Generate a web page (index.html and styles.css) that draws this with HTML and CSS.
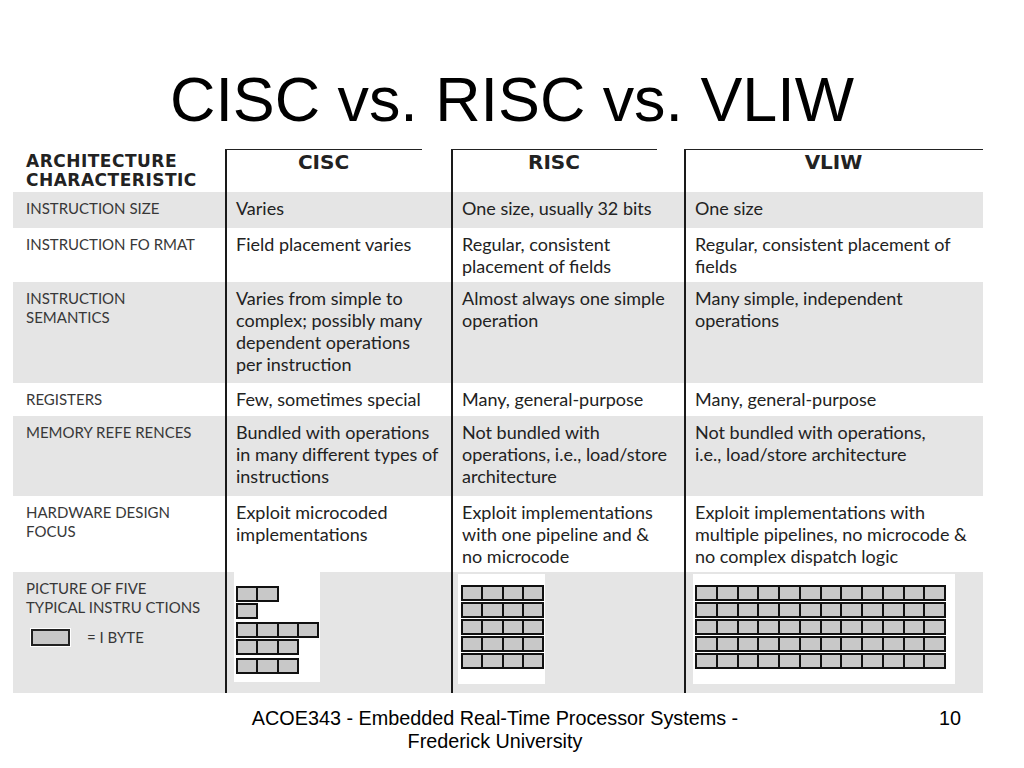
FILE: index.html
```html
<!DOCTYPE html>
<html>
<head>
<meta charset="utf-8">
<link rel="stylesheet" href="styles.css">
</head>
<body>
<h1 class="title">CISC vs. RISC vs. VLIW</h1>
<div class="table">
  <div class="label-head">ARCHITECTURE<br>CHARACTERISTIC</div>
  <div class="col head"><div class="hline hl-cisc">CISC</div></div>
  <div class="col head"><div class="hline hl-risc">RISC</div></div>
  <div class="col head"><div class="hline">VLIW</div></div>

  <div class="label gray">INSTRUCTION SIZE</div>
  <div class="col cell gray">Varies</div>
  <div class="col cell gray">One size, usually 32 bits</div>
  <div class="col cell gray">One size</div>

  <div class="label">INSTRUCTION FO RMAT</div>
  <div class="col cell">Field placement varies</div>
  <div class="col cell">Regular, consistent<br>placement of fields</div>
  <div class="col cell">Regular, consistent placement of<br>fields</div>

  <div class="label gray">INSTRUCTION<br>SEMANTICS</div>
  <div class="col cell gray">Varies from simple to<br>complex; possibly many<br>dependent operations<br>per instruction</div>
  <div class="col cell gray">Almost always one simple<br>operation</div>
  <div class="col cell gray">Many simple, independent<br>operations</div>

  <div class="label">REGISTERS</div>
  <div class="col cell">Few, sometimes special</div>
  <div class="col cell">Many, general-purpose</div>
  <div class="col cell">Many, general-purpose</div>

  <div class="label gray">MEMORY REFE RENCES</div>
  <div class="col cell gray">Bundled with operations<br>in many different types of<br>instructions</div>
  <div class="col cell gray">Not bundled with<br>operations, i.e., load/store<br>architecture</div>
  <div class="col cell gray">Not bundled with operations,<br>i.e., load/store architecture</div>

  <div class="label">HARDWARE DESIGN<br>FOCUS</div>
  <div class="col cell">Exploit microcoded<br>implementations</div>
  <div class="col cell">Exploit implementations<br>with one pipeline and &amp;<br>no microcode</div>
  <div class="col cell">Exploit implementations with<br>multiple pipelines, no microcode &amp;<br>no complex dispatch logic</div>

  <div class="label gray pic-label">
    <div>PICTURE OF FIVE<br>TYPICAL INSTRU CTIONS</div>
    <div class="legend"><span class="legend-box"></span><span>= I BYTE</span></div>
  </div>
  <div class="col pic gray">
    <div class="wbox wb-cisc">
      <div class="brow"><i></i><i></i></div>
      <div class="brow"><i></i></div>
      <div class="brow gap"><i></i><i></i><i></i><i></i></div>
      <div class="brow"><i></i><i></i><i></i></div>
      <div class="brow gap"><i></i><i></i><i></i></div>
    </div>
  </div>
  <div class="col pic gray">
    <div class="wbox wb-risc">
      <div class="brow"><i></i><i></i><i></i><i></i></div>
      <div class="brow"><i></i><i></i><i></i><i></i></div>
      <div class="brow"><i></i><i></i><i></i><i></i></div>
      <div class="brow"><i></i><i></i><i></i><i></i></div>
      <div class="brow"><i></i><i></i><i></i><i></i></div>
    </div>
  </div>
  <div class="col pic gray">
    <div class="wbox wb-vliw">
      <div class="brow"><i></i><i></i><i></i><i></i><i></i><i></i><i></i><i></i><i></i><i></i><i></i><i></i></div>
      <div class="brow"><i></i><i></i><i></i><i></i><i></i><i></i><i></i><i></i><i></i><i></i><i></i><i></i></div>
      <div class="brow"><i></i><i></i><i></i><i></i><i></i><i></i><i></i><i></i><i></i><i></i><i></i><i></i></div>
      <div class="brow"><i></i><i></i><i></i><i></i><i></i><i></i><i></i><i></i><i></i><i></i><i></i><i></i></div>
      <div class="brow"><i></i><i></i><i></i><i></i><i></i><i></i><i></i><i></i><i></i><i></i><i></i><i></i></div>
    </div>
  </div>
</div>
<footer class="footer">
  <div class="foot-text">ACOE343 - Embedded Real-Time Processor Systems -<br>Frederick University</div>
  <div class="page">10</div>
</footer>
</body>
</html>
```
FILE: styles.css
```css
html, body {
  margin: 0;
  padding: 0;
  background: #ffffff;
}
body {
  width: 1024px;
  height: 768px;
  overflow: hidden;
  font-family: "Liberation Sans", Arial, sans-serif;
  color: #000;
}
.title {
  margin: 68px 0 0 0;
  height: 62px;
  font-family: "Liberation Sans", Arial, sans-serif;
  font-weight: normal;
  font-size: 62.8px;
  line-height: 62px;
  text-align: center;
  color: #000;
}
.table {
  margin: 20px 0 0 13px;
  width: 970px;
  display: grid;
  grid-template-columns: 212px 226px 233px 299px;
  grid-template-rows: 42px 36px 54px 101px 33px 80px 76px 121px;
  font-family: Lato, "Open Sans", sans-serif;
}
.gray {
  background: #e5e5e5;
}
.col {
  box-sizing: border-box;
  border-left: 2px solid #1a1a1a;
}
.label-head {
  padding: 2px 0 0 13px;
  font-family: "DejaVu Sans", sans-serif;
  font-size: 17px;
  letter-spacing: 0.5px;
  line-height: 19px;
  font-weight: bold;
  color: #222;
}
.hline {
  border-top: 1.5px solid #222;
  margin-top: -1px;
  margin-left: -2px;
  text-align: center;
  font-family: "DejaVu Sans", sans-serif;
  font-weight: bold;
  font-size: 20px;
  line-height: 25px;
  color: #222;
}
.hl-cisc { margin-right: 29px; }
.hl-risc { margin-right: 27px; }
.label {
  padding: 7px 0 0 13px;
  font-size: 15px;
  line-height: 19px;
  color: #383838;
  white-space: nowrap;
}
.cell {
  padding: 5px 0 0 9px;
  font-size: 18px;
  line-height: 22px;
  color: #222;
  white-space: nowrap;
}
.legend {
  display: flex;
  align-items: center;
  gap: 17px;
  margin: 11px 0 0 5px;
}
.legend-box {
  display: block;
  width: 39px;
  height: 17px;
  box-sizing: border-box;
  border: 2px solid #222;
  background: #c8c8c8;
  outline: 1px solid #fff;
}
.pic {
  padding-left: 5px;
}
.wbox {
  background: #fff;
  box-sizing: border-box;
  display: flex;
  flex-direction: column;
  gap: 1px;
}
.wb-cisc {
  margin-left: 2px;
  width: 86px;
  height: 110px;
  padding: 14px 0 0 2px;
}
.wb-risc {
  margin: 2px 0 0 0;
  width: 87px;
  height: 110px;
  padding: 11px 0 0 3px;
}
.wb-vliw {
  margin: 2px 0 0 2px;
  width: 262px;
  height: 110px;
  padding: 11px 0 0 2px;
}
.brow {
  display: flex;
  align-self: flex-start;
  border: 1px solid #111;
  height: 16px;
  box-sizing: border-box;
}
.brow.gap {
  margin-top: 2px;
}
.brow i {
  display: block;
  width: 20.3px;
  height: 14px;
  box-sizing: border-box;
  border: 1px solid #111;
  background: #c8c8c8;
}
.wb-vliw .brow i {
  width: 20.75px;
}
.footer {
  display: flex;
  margin-top: 14px;
  font-family: "Liberation Sans", Arial, sans-serif;
  font-size: 19.8px;
  line-height: 23px;
  color: #000;
}
.foot-text {
  margin-left: 245px;
  width: 500px;
  text-align: center;
  white-space: nowrap;
}
.page {
  margin-left: auto;
  margin-right: 63px;
}
```
